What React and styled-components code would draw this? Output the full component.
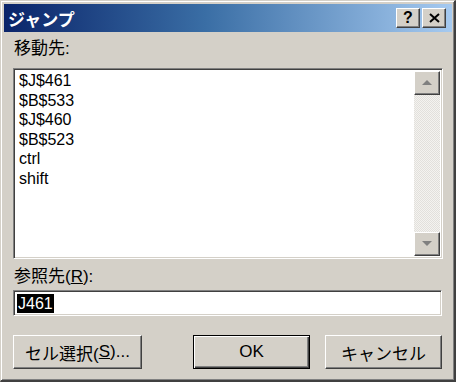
import styled, { createGlobalStyle, css } from "styled-components";

const GlobalStyle = createGlobalStyle`
  html, body {
    margin: 0;
    padding: 0;
    background: #d4d0c8;
  }
  body {
    font-family: "Liberation Sans", "Noto Sans CJK JP", sans-serif;
  }
`;

const raised = css`
  border-top: 1px solid #ffffff;
  border-left: 1px solid #ffffff;
  border-right: 1px solid #404040;
  border-bottom: 1px solid #404040;
  box-shadow: inset -1px -1px 0 #808080;
`;

const sunken = css`
  border-top: 1px solid #808080;
  border-left: 1px solid #808080;
  border-right: 1px solid #ffffff;
  border-bottom: 1px solid #ffffff;
  box-shadow: inset 1px 1px 0 #404040, inset -1px -1px 0 #d4d0c8;
`;

const Window = styled.div`
  box-sizing: border-box;
  width: 456px;
  height: 382px;
  background: #d4d0c8;
  border-top: 1px solid #d4d0c8;
  border-left: 1px solid #d4d0c8;
  border-right: 2px solid #404040;
  border-bottom: 2px solid #404040;
  box-shadow: inset 1px 1px 0 #ffffff, inset -1px -1px 0 #808080;
  padding: 3px 2px 2px 3px;
  display: flex;
  flex-direction: column;
  font-size: 17px;
  color: #000;
`;

const TitleBar = styled.div`
  height: 28px;
  background: linear-gradient(to right, #0a246a 0%, #3a6ea5 45%, #a6caf0 100%);
  display: flex;
  align-items: center;
  padding: 0 6px 0 4px;
`;

const Title = styled.span`
  flex: 1;
  color: #fff;
  font-weight: bold;
  font-size: 17px;
`;

const TitleButton = styled.div`
  box-sizing: border-box;
  width: 24px;
  height: 20px;
  margin-left: 2px;
  background: #d4d0c8;
  ${raised};
  display: flex;
  align-items: center;
  justify-content: center;
  font-weight: bold;
  font-size: 16px;
`;

const Body = styled.div`
  flex: 1;
  display: flex;
  flex-direction: column;
  padding: 6px 9px 0 9px;
`;

const Label = styled.div`
  height: 22px;
  line-height: 22px;
  margin-top: ${(p) => p.$top || 0}px;
  margin-left: 1px;
`;

const ListBox = styled.div`
  box-sizing: border-box;
  margin-top: 8px;
  height: 191px;
  background: #fff;
  ${sunken};
  display: flex;
  padding: 2px;
`;

const Items = styled.ul`
  flex: 1;
  list-style: none;
  margin: 0;
  padding: 0 0 0 3px;
  font-size: 16px;
`;

const Item = styled.li`
  height: 19.5px;
  line-height: 19px;
`;

const ScrollBar = styled.div`
  width: 26px;
  display: flex;
  flex-direction: column;
`;

const ScrollButton = styled.div`
  box-sizing: border-box;
  height: 24px;
  background: #d4d0c8;
  ${raised};
  display: flex;
  align-items: center;
  justify-content: center;
`;

const Track = styled.div`
  flex: 1;
  background-color: #eceae6;
  background-image: repeating-conic-gradient(#e2e0dc 0 25%, #f4f3f0 0 50%);
  background-size: 2px 2px;
`;

const Input = styled.div`
  box-sizing: border-box;
  margin-top: 2px;
  height: 26px;
  width: 429px;
  background: #fff;
  ${sunken};
  padding: 2px 3px;
  display: flex;
  align-items: center;
`;

const Selected = styled.span`
  background: #000;
  color: #fff;
  font-size: 16px;
  line-height: 19px;
  padding: 0 1px;
`;

const ButtonRow = styled.div`
  margin-top: 19px;
  display: flex;
  width: 429px;
  justify-content: space-between;
`;

const Group = styled.div`
  display: flex;
  gap: 15px;
`;

const Button = styled.div`
  box-sizing: border-box;
  width: ${(p) => p.$w}px;
  height: 34px;
  background: #d4d0c8;
  ${raised};
  ${(p) =>
    p.$default &&
    css`
      border: 1px solid #000;
      box-shadow: inset 1px 1px 0 #ffffff, inset -1px -1px 0 #404040,
        inset -2px -2px 0 #808080;
    `}
  display: flex;
  align-items: center;
  justify-content: center;
  font-size: 17px;
`;

const U = styled.span`
  text-decoration: underline;
`;

const Arrow = ({ up }) => (
  <svg width="10" height="6" viewBox="0 0 10 6">
    <polygon points={up ? "5,0 10,5 0,5" : "0,0 10,0 5,5"} fill="#808080" />
  </svg>
);

const items = ["$J$461", "$B$533", "$J$460", "$B$523", "ctrl", "shift"];

export default function App() {
  return (
    <>
      <GlobalStyle />
      <Window>
        <TitleBar>
          <Title>ジャンプ</Title>
          <TitleButton>?</TitleButton>
          <TitleButton>
            <svg width="11" height="10" viewBox="0 0 11 10">
              <path d="M1 1 L10 9 M10 1 L1 9" stroke="#000" strokeWidth="2" />
            </svg>
          </TitleButton>
        </TitleBar>
        <Body>
          <Label>移動先:</Label>
          <ListBox>
            <Items>
              {items.map((it) => (
                <Item key={it}>{it}</Item>
              ))}
            </Items>
            <ScrollBar>
              <ScrollButton>
                <Arrow up />
              </ScrollButton>
              <Track />
              <ScrollButton>
                <Arrow />
              </ScrollButton>
            </ScrollBar>
          </ListBox>
          <Label $top={7}>
            参照先(<U>R</U>):
          </Label>
          <Input>
            <Selected>J461</Selected>
          </Input>
          <ButtonRow>
            <Button $w={129}>
              セル選択(<U>S</U>)...
            </Button>
            <Group>
              <Button $w={117} $default>
                OK
              </Button>
              <Button $w={117}>キャンセル</Button>
            </Group>
          </ButtonRow>
        </Body>
      </Window>
    </>
  );
}
